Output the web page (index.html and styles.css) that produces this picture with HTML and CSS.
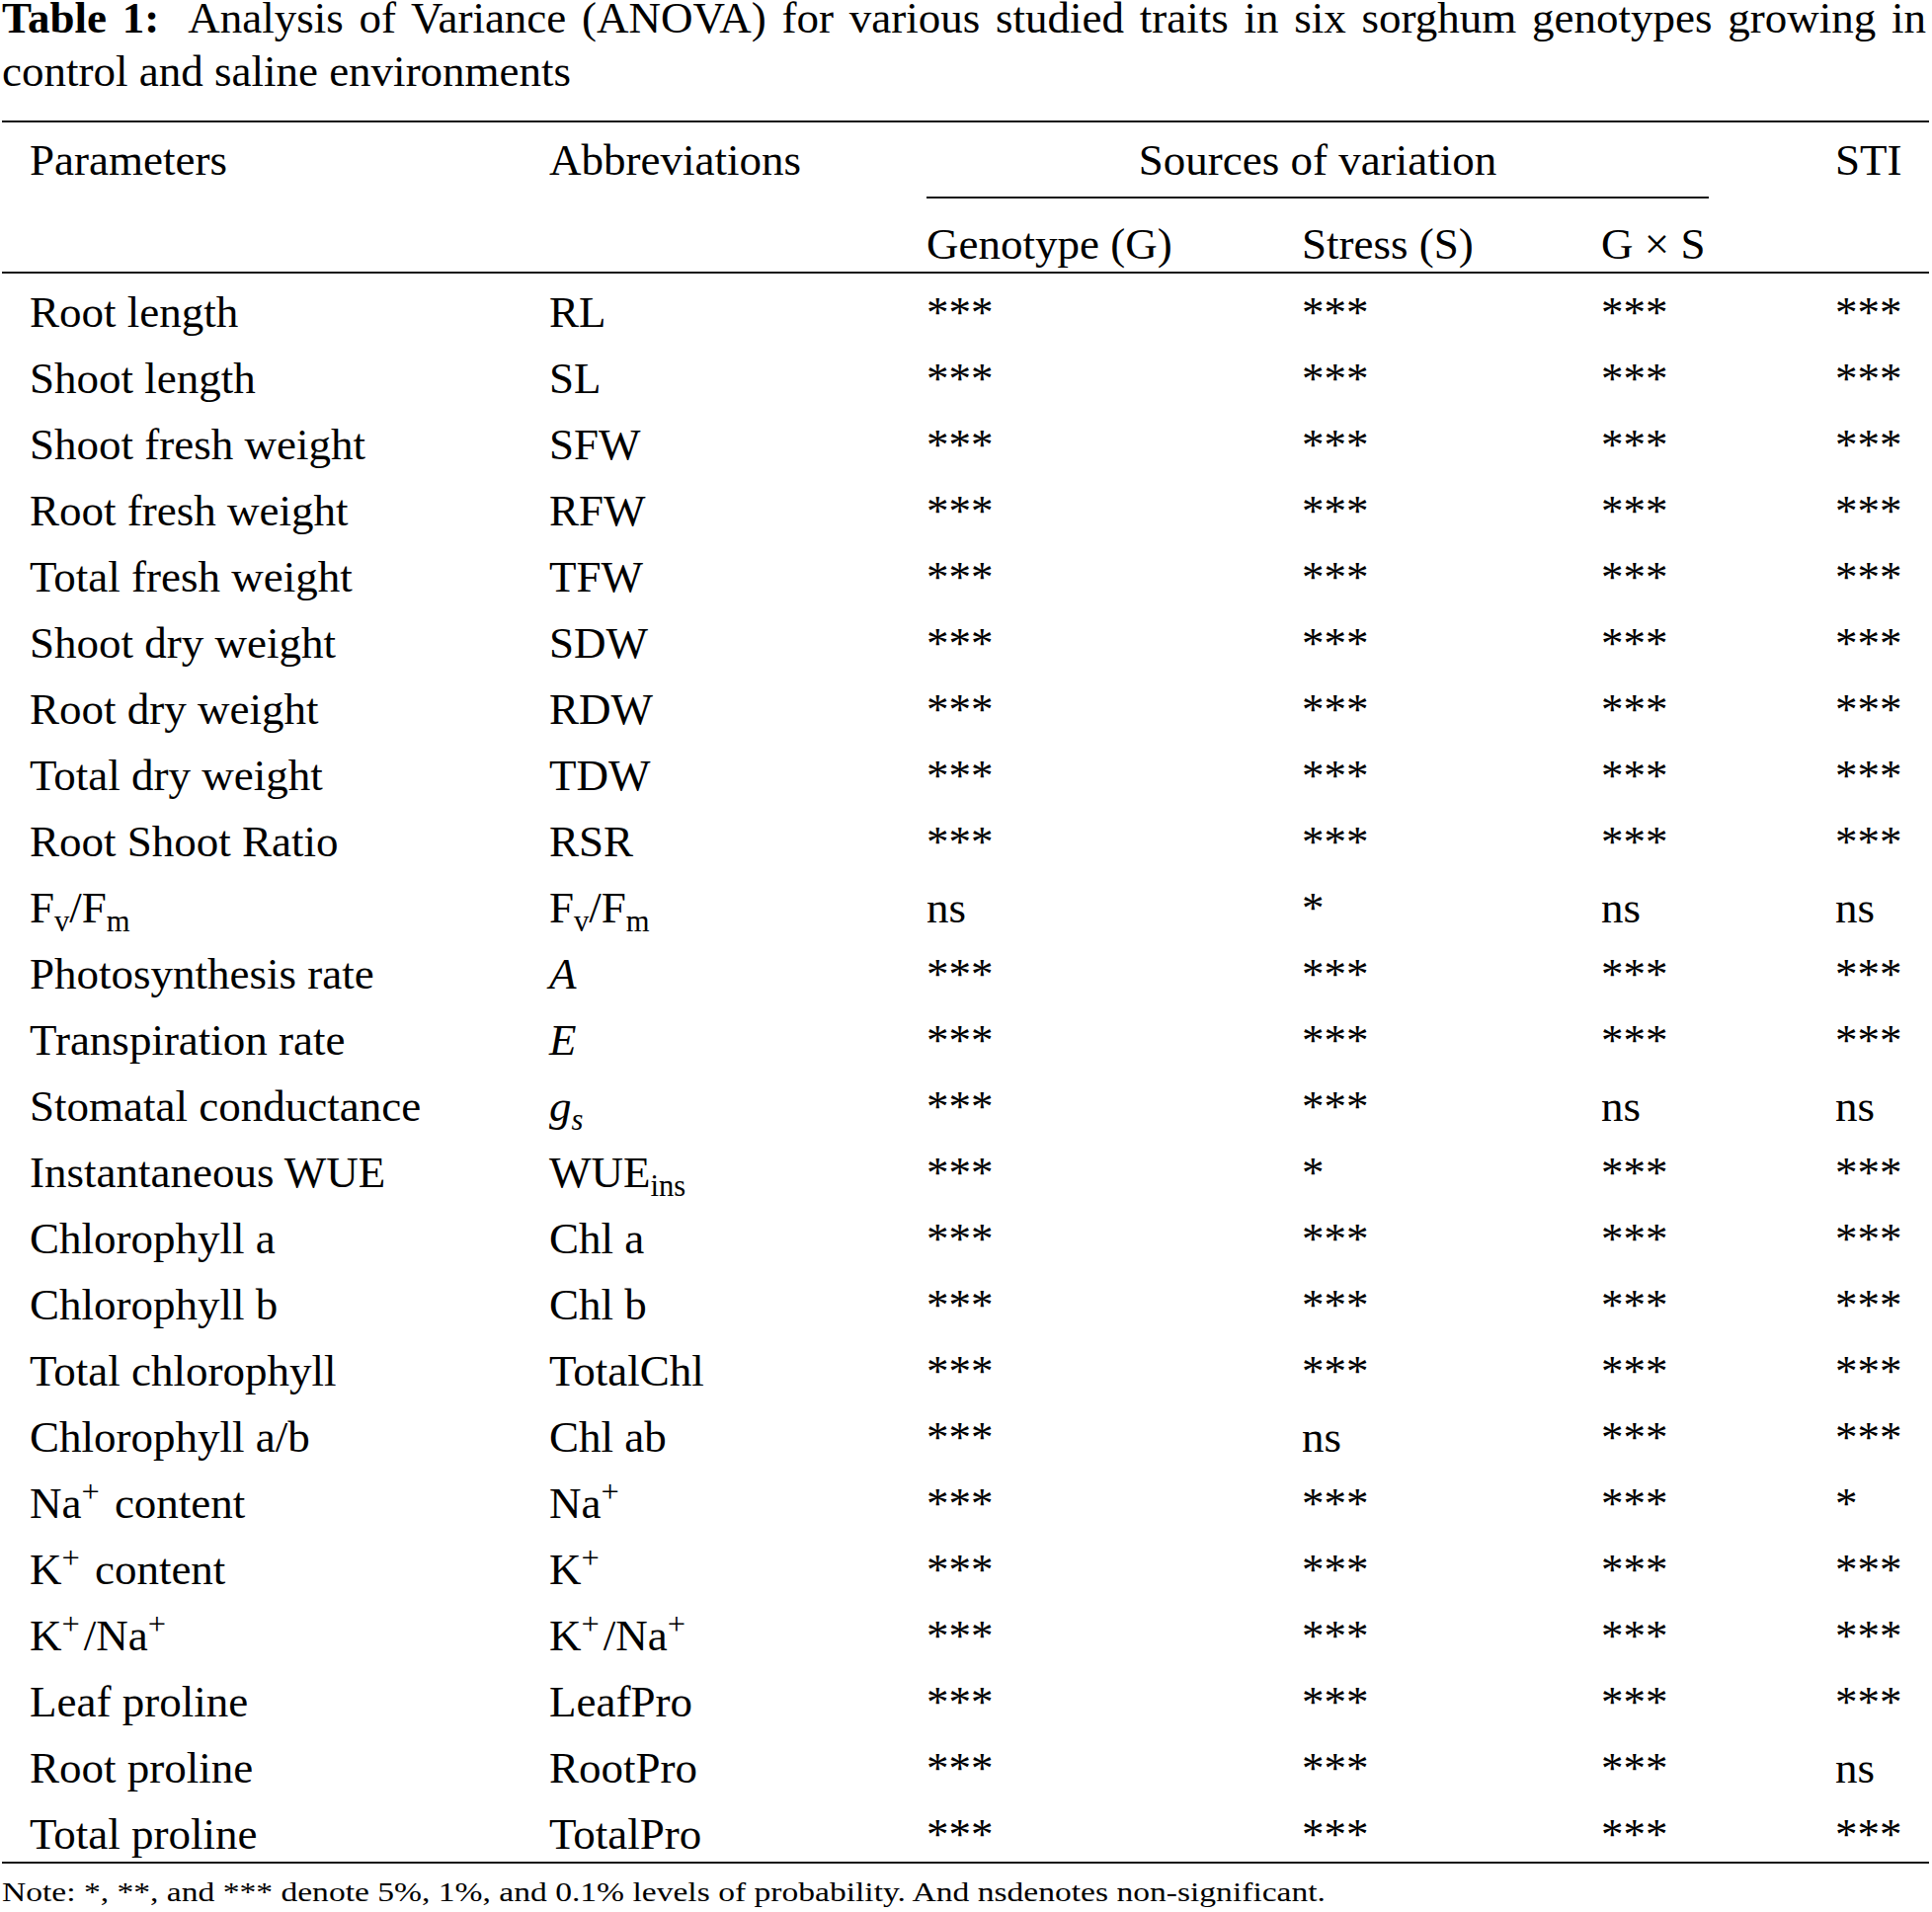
FILE: index.html
```html
<!DOCTYPE html>
<html lang="en">
<head>
<meta charset="utf-8">
<title>Table 1</title>
<link rel="stylesheet" href="styles.css">
</head>
<body>
<div class="page">
  <div class="caption">
    <div class="caption-line1"><b>Table 1:</b>&nbsp; Analysis of Variance (ANOVA) for various studied traits in six sorghum genotypes growing in</div>
    <div class="caption-line2">control and saline environments</div>
  </div>
  <table class="anova">
    <colgroup>
      <col class="c1"><col class="c2"><col class="c3"><col class="c4"><col class="c5"><col class="c6">
    </colgroup>
    <thead>
      <tr class="h1">
        <th class="first">Parameters</th>
        <th>Abbreviations</th>
        <th colspan="3" class="group"><div class="group-label">Sources of variation</div></th>
        <th>STI</th>
      </tr>
      <tr class="h2">
        <th class="first"></th>
        <th></th>
        <th>Genotype (G)</th>
        <th>Stress (S)</th>
        <th>G × S</th>
        <th></th>
      </tr>
    </thead>
    <tbody>
      <tr><td class="first">Root length</td><td>RL</td><td>***</td><td>***</td><td>***</td><td>***</td></tr>
      <tr><td class="first">Shoot length</td><td>SL</td><td>***</td><td>***</td><td>***</td><td>***</td></tr>
      <tr><td class="first">Shoot fresh weight</td><td>SFW</td><td>***</td><td>***</td><td>***</td><td>***</td></tr>
      <tr><td class="first">Root fresh weight</td><td>RFW</td><td>***</td><td>***</td><td>***</td><td>***</td></tr>
      <tr><td class="first">Total fresh weight</td><td>TFW</td><td>***</td><td>***</td><td>***</td><td>***</td></tr>
      <tr><td class="first">Shoot dry weight</td><td>SDW</td><td>***</td><td>***</td><td>***</td><td>***</td></tr>
      <tr><td class="first">Root dry weight</td><td>RDW</td><td>***</td><td>***</td><td>***</td><td>***</td></tr>
      <tr><td class="first">Total dry weight</td><td>TDW</td><td>***</td><td>***</td><td>***</td><td>***</td></tr>
      <tr><td class="first">Root Shoot Ratio</td><td>RSR</td><td>***</td><td>***</td><td>***</td><td>***</td></tr>
      <tr><td class="first">F<sub>v</sub>/F<sub>m</sub></td><td>F<sub>v</sub>/F<sub>m</sub></td><td>ns</td><td>*</td><td>ns</td><td>ns</td></tr>
      <tr><td class="first">Photosynthesis rate</td><td><i>A</i></td><td>***</td><td>***</td><td>***</td><td>***</td></tr>
      <tr><td class="first">Transpiration rate</td><td><i>E</i></td><td>***</td><td>***</td><td>***</td><td>***</td></tr>
      <tr><td class="first">Stomatal conductance</td><td><i>g<sub>s</sub></i></td><td>***</td><td>***</td><td>ns</td><td>ns</td></tr>
      <tr><td class="first">Instantaneous WUE</td><td>WUE<sub>ins</sub></td><td>***</td><td>*</td><td>***</td><td>***</td></tr>
      <tr><td class="first">Chlorophyll a</td><td>Chl a</td><td>***</td><td>***</td><td>***</td><td>***</td></tr>
      <tr><td class="first">Chlorophyll b</td><td>Chl b</td><td>***</td><td>***</td><td>***</td><td>***</td></tr>
      <tr><td class="first">Total chlorophyll</td><td>TotalChl</td><td>***</td><td>***</td><td>***</td><td>***</td></tr>
      <tr><td class="first">Chlorophyll a/b</td><td>Chl ab</td><td>***</td><td>ns</td><td>***</td><td>***</td></tr>
      <tr><td class="first">Na<sup>+</sup> content</td><td>Na<sup>+</sup></td><td>***</td><td>***</td><td>***</td><td>*</td></tr>
      <tr><td class="first">K<sup>+</sup> content</td><td>K<sup>+</sup></td><td>***</td><td>***</td><td>***</td><td>***</td></tr>
      <tr><td class="first">K<sup>+</sup>/Na<sup>+</sup></td><td>K<sup>+</sup>/Na<sup>+</sup></td><td>***</td><td>***</td><td>***</td><td>***</td></tr>
      <tr><td class="first">Leaf proline</td><td>LeafPro</td><td>***</td><td>***</td><td>***</td><td>***</td></tr>
      <tr><td class="first">Root proline</td><td>RootPro</td><td>***</td><td>***</td><td>***</td><td>ns</td></tr>
      <tr><td class="first">Total proline</td><td>TotalPro</td><td>***</td><td>***</td><td>***</td><td>***</td></tr>
    </tbody>
  </table>
  <p class="note">Note: *, **, and *** denote 5%, 1%, and 0.1% levels of probability. And nsdenotes non-significant.</p>
</div>
</body>
</html>
```

FILE: styles.css
```css
html, body {
  margin: 0;
  padding: 0;
  background: #ffffff;
}

body {
  font-family: "Liberation Serif", "Times New Roman", serif;
  color: #000000;
  font-size: 45px;
}

.page {
  width: 1951px;
  padding-left: 2px;
}

.caption {
  width: 1948px;
  line-height: 36px;
}

.caption-line1 {
  text-align: justify;
  text-align-last: justify;
  white-space: nowrap;
}

.caption-line2 {
  margin-top: 18px;
  text-align: left;
}

.anova {
  margin-top: 32px;
  width: 1951px;
  table-layout: fixed;
  border-collapse: separate;
  border-spacing: 0;
  font-size: 45px;
}

.c1 { width: 554px; }
.c2 { width: 382px; }
.c3 { width: 380px; }
.c4 { width: 303px; }
.c5 { width: 237px; }
.c6 { width: 95px; }

.anova th,
.anova td {
  padding: 0;
  text-align: left;
  font-weight: normal;
  white-space: nowrap;
  line-height: 50px;
  vertical-align: top;
}

.anova .first {
  padding-left: 28px;
}

.h1 th {
  border-top: 2px solid #111;
  padding-top: 13px;
  padding-bottom: 14px;
}

.h1 th.group {
  padding-bottom: 0;
}

.group-label {
  width: 792px;
  text-align: center;
  padding-bottom: 12px;
  border-bottom: 2px solid #111;
}

.h2 th {
  padding-top: 21px;
  padding-bottom: 3px;
  border-bottom: 2px solid #111;
}

.anova tbody td {
  padding-top: 14px;
  padding-bottom: 3px;
}

.anova tbody td.first {
  padding-left: 28px;
}

.anova tbody tr:last-child td {
  border-bottom: 2px solid #111;
}

sub {
  font-size: 0.68em;
  line-height: 0;
  vertical-align: -0.3em;
}

sup {
  font-size: 0.72em;
  line-height: 0;
  vertical-align: 0.5em;
  padding-right: 0.12em;
}

.note {
  margin: 14px 0 0 0;
  width: max-content;
  font-size: 27px;
  line-height: 30px;
  white-space: nowrap;
  transform: scaleX(1.243);
  transform-origin: left center;
}
```
